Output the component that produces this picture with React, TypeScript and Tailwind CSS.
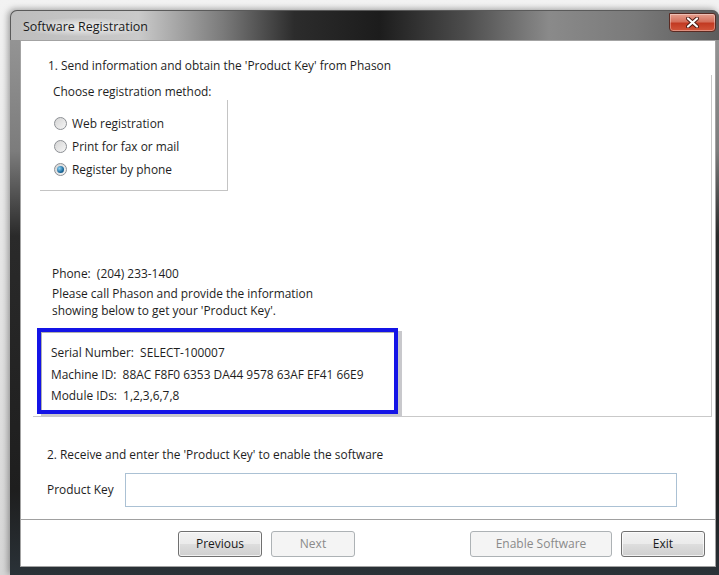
import { ReactNode } from "react";

type RadioProps = { label: string; checked?: boolean };

const Radio = ({ label, checked }: RadioProps) => (
  <label className="flex h-[23px] items-center">
    <span className="ml-[14px] flex size-[13px] items-center justify-center rounded-full border border-[#8c8f94] bg-[linear-gradient(135deg,#d4d4d4,#f6f6f6)]">
      {checked && (
        <span className="size-[7px] rounded-full bg-[radial-gradient(circle_at_35%_35%,#8fd3f5,#1b6a9c_60%,#0f3f66)]" />
      )}
    </span>
    <span className="ml-[5px]">{label}</span>
  </label>
);

type ButtonProps = { children: ReactNode; width: string; disabled?: boolean; className?: string };

const WinButton = ({ children, width, disabled, className }: ButtonProps) => (
  <button
    disabled={disabled}
    className={`${width} ${className ?? ""} h-[26px] rounded-[3px] border text-[12px] ${
      disabled
        ? "border-[#adb2b5] bg-[#f4f4f4] text-[#8a8a8a]"
        : "border-[#707070] bg-[linear-gradient(180deg,#f2f2f2_0%,#ebebeb_48%,#dddddd_52%,#cfcfcf_100%)] text-[#1a1a1a] shadow-[inset_0_0_0_1px_rgba(255,255,255,0.7)]"
    }`}
  >
    {children}
  </button>
);

const CloseButton = () => (
  <div className="mr-[3px] mt-[2px] flex h-[19px] w-[47px] items-center justify-center rounded-b-[4px] rounded-tr-[3px] border border-[#5a2a22] bg-[linear-gradient(180deg,#e7a08f_0%,#d4705c_45%,#c23a22_55%,#d2553a_100%)] shadow-[inset_0_0_0_1px_rgba(255,255,255,0.35)]">
    <svg width="13" height="11" viewBox="0 0 13 11">
      <path
        d="M2 1.5 L11 9.5 M11 1.5 L2 9.5"
        stroke="#4a1a12"
        strokeWidth="4"
        strokeLinecap="round"
      />
      <path
        d="M2 1.5 L11 9.5 M11 1.5 L2 9.5"
        stroke="#ffffff"
        strokeWidth="2.2"
        strokeLinecap="round"
      />
    </svg>
  </div>
);

export default function App() {
  return (
    <div className="h-[575px] w-[719px] overflow-hidden bg-[linear-gradient(180deg,#f2f2f2_0%,#d6d6d6_100%)] pl-[10px] pt-[10px] font-['Open_Sans','Noto_Sans',sans-serif] text-[11.9px] text-[#1e1e1e]">
      <div className="flex h-[565px] w-[709px] flex-col rounded-t-[7px] bg-[linear-gradient(180deg,#9a9a9a_0%,#7c7c7c_25%,#2a2a2a_40%,#1e1e1e_85%,#2a3238_100%)] shadow-[-2px_-1px_6px_rgba(0,0,0,0.35)]">
        {/* title bar */}
        <div className="flex h-[30px] shrink-0 rounded-t-[7px] border-t border-l border-[#5a5a5a] bg-[linear-gradient(90deg,#bdbdbd_0%,#cacaca_18%,#7a7a7a_30%,#2c2c2c_40%,#1c1c1c_52%,#4c4c4c_64%,#8a8a8a_76%,#7a7a7a_88%,#5c5c5c_100%)]">
          <span className="ml-[10px] mt-[7px] h-[18px] rounded-[9px] bg-[radial-gradient(ellipse_at_center,rgba(255,255,255,0.75),rgba(255,255,255,0)_75%)] px-[2px] text-[12.5px] leading-[18px] text-[#1a1a1a]">
            Software Registration
          </span>
          <div className="ml-auto">
            <CloseButton />
          </div>
        </div>

        <div className="flex flex-1">
          <div className="w-[10px]" />
          {/* client area */}
          <div className="flex w-[696px] flex-col border border-[#a3a3a3] bg-white">
            <div className="h-[478px] pt-[16px]">
              <p className="ml-[27px] leading-[16px]">
                1. Send information and obtain the 'Product Key' from Phason
              </p>

              <div className="ml-[12px] mt-[2px] h-[342px] w-[679px] border-b border-r border-[#c9c9c9] pt-[8px]">
                <p className="ml-[20px] leading-[16px]">Choose registration method:</p>

                <div className="ml-[7px] mt-[1px] h-[91px] w-[188px] border-b border-r border-[#c4c4c4] pt-[12px]">
                  <Radio label="Web registration" />
                  <Radio label="Print for fax or mail" />
                  <Radio label="Register by phone" checked />
                </div>

                <p className="ml-[19px] mt-[74px] leading-[16px]">Phone:&nbsp; (204) 233-1400</p>
                <p className="ml-[19px] mt-[4px] leading-[17px]">
                  Please call Phason and provide the information
                  <br />
                  showing below to get your 'Product Key'.
                </p>

                <div className="ml-[4px] mt-[9px] h-[86px] w-[361px] border-[4px] border-[#1414e6] shadow-[4px_3px_0_#c8c8cc]">
                  <div className="h-full border-l border-t border-[#b0b0b0] pl-[9px] pt-[9px] leading-[21.5px]">
                    <p>Serial Number:&nbsp; SELECT-100007</p>
                    <p>Machine ID:&nbsp; 88AC F8F0 6353 DA44 9578 63AF EF41 66E9</p>
                    <p>Module IDs:&nbsp; 1,2,3,6,7,8</p>
                  </div>
                </div>
              </div>

              <p className="ml-[26px] mt-[29px] leading-[16px]">
                2. Receive and enter the 'Product Key' to enable the software
              </p>
              <div className="mt-[11px] flex items-center">
                <span className="ml-[26px] w-[78px]">Product Key</span>
                <div className="h-[34px] w-[552px] border border-[#abc1d4] bg-white" />
              </div>
            </div>

            {/* button strip */}
            <div className="flex flex-1 items-start border-t border-[#a0a0a0] pt-[11px]">
              <WinButton width="w-[84px]" className="ml-[157px]">
                Previous
              </WinButton>
              <WinButton width="w-[84px]" className="ml-[9px]" disabled>
                Next
              </WinButton>
              <WinButton width="w-[142px]" className="ml-[115px]" disabled>
                Enable Software
              </WinButton>
              <WinButton width="w-[84px]" className="ml-[9px]">
                Exit
              </WinButton>
            </div>
          </div>
        </div>
        <div className="h-[8px] shrink-0" />
      </div>
    </div>
  );
}
